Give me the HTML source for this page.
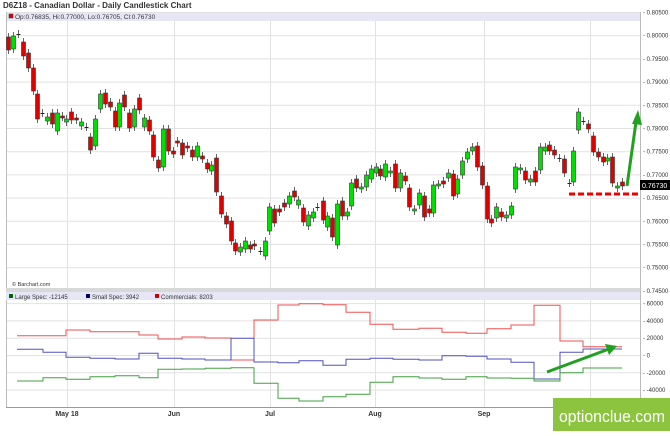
<!DOCTYPE html>
<html><head><meta charset="utf-8"><style>
body{margin:0;width:670px;height:431px;overflow:hidden;background:#fff;font-family:"Liberation Sans",sans-serif}
</style></head><body>
<svg id="s" width="670" height="431" xmlns="http://www.w3.org/2000/svg" font-family="Liberation Sans, sans-serif">
<rect width="670" height="431" fill="#fff"/>
<text x="3" y="8" font-size="8" font-weight="bold" fill="#333">D6Z18 - Canadian Dollar - Daily Candlestick Chart</text>
<rect x="6" y="12" width="634" height="9" fill="#e6e6f7"/>
<rect x="9" y="14" width="4" height="4" fill="#d00" stroke="#333" stroke-width="0.5"/>
<text x="15" y="19" font-size="6.5" fill="#333">Op:0.76835, Hi:0.77000, Lo:0.76705, Cl:0.76730</text>
<g id="grid" stroke="#e2e2e2" stroke-width="1"></g>
<line x1="6.5" y1="12" x2="6.5" y2="407" stroke="#bbb"/>
<line x1="640.5" y1="12" x2="640.5" y2="407" stroke="#bbb"/>
<rect x="6" y="288" width="634" height="4" fill="#d8d8d8"/>
<rect x="6" y="292" width="634" height="8" fill="#e6e6f7"/>
<rect x="9" y="294" width="4" height="4" fill="#060"/>
<text x="15" y="299" font-size="6" fill="#333">Large Spec: -12145</text>
<rect x="86" y="294" width="4" height="4" fill="#006"/>
<text x="92" y="299" font-size="6" fill="#333">Small Spec: 3942</text>
<rect x="155" y="294" width="4" height="4" fill="#c00"/>
<text x="161" y="299" font-size="6" fill="#333">Commercials: 8203</text>
<line x1="6" y1="407.5" x2="640" y2="407.5" stroke="#999"/>
<text x="12" y="286" font-size="5.5" fill="#333">© Barchart.com</text>
<g id="c"></g>
<g id="lines" fill="none" stroke-width="1"></g>
<line x1="569" y1="194" x2="640" y2="194" stroke="#e00" stroke-width="3" stroke-dasharray="6,3"/>
<line x1="627" y1="186" x2="636" y2="122" stroke="#22a022" stroke-width="3"/>
<polygon points="638,110 632,124 642,125" fill="#22a022"/>
<line x1="547" y1="372" x2="609" y2="349" stroke="#22a022" stroke-width="3"/>
<polygon points="617,346 605,344 609,355" fill="#22a022"/>
<rect x="640" y="180" width="30" height="10" fill="#000"/>
<text x="642" y="188" font-size="7" fill="#fff">0.76730</text>
<g font-size="7" font-weight="bold" fill="#333" text-anchor="middle">
<text x="67" y="416">May 18</text><text x="174" y="416">Jun</text><text x="270" y="416">Jul</text><text x="375" y="416">Aug</text><text x="484" y="416">Sep</text></g>
<g id="lab" font-size="6" fill="#333"></g>
<rect x="553" y="398" width="117" height="33" fill="#8cc43f"/>
<text x="559" y="422" font-size="17" fill="#fff" textLength="106" lengthAdjust="spacingAndGlyphs">optionclue.com</text>
</svg>
<script>
var NS="http://www.w3.org/2000/svg";
function el(p,t,a){var e=document.createElementNS(NS,t);for(var k in a)e.setAttribute(k,a[k]);document.getElementById(p).appendChild(e);return e;}
for(var i=0;i<=12;i++){var y=12+i*23.2;el("grid","line",{x1:6,x2:640,y1:y+.5,y2:y+.5});
var t=el("lab","text",{x:643,y:y+2.5});t.textContent="- "+(0.805-i*0.005).toFixed(5);}
[67,174,270,375,484,590].forEach(function(x){el("grid","line",{x1:x+.5,x2:x+.5,y1:21,y2:288});el("grid","line",{x1:x+.5,x2:x+.5,y1:300,y2:407});});
[60000,40000,20000,0,-20000,-40000].forEach(function(v){var y=355-v/20000*17.3;el("grid","line",{x1:6,x2:640,y1:y+.5,y2:y+.5});
var t=el("lab","text",{x:643,y:y+2.5});t.textContent="- "+v;});
var C=[[8,37,50,'r'],[13,36,49,'g'],[18,34,34,'d'],[23,42,56,'r'],[28,53,68,'r'],[33,68,91,'r'],[37,94,119,'r'],[42,113,113,'d'],[47,117,121,'g'],[52,113,124,'r'],[57,113,131,'g'],[62,116,117,'r'],[66,119,122,'g'],[71,112,120,'r'],[76,118,120,'r'],[81,122,126,'g'],[86,127,127,'d'],[90,137,150,'r'],[95,119,146,'g'],[100,94,109,'g'],[105,93,104,'r'],[110,102,107,'r'],[115,111,127,'r'],[119,103,127,'g'],[124,95,107,'r'],[129,113,128,'r'],[134,109,127,'g'],[139,98,110,'r'],[144,118,127,'g'],[149,120,131,'r'],[153,135,157,'r'],[158,160,168,'r'],[163,129,167,'g'],[168,129,151,'r'],[173,151,154,'r'],[177,141,143,'r'],[182,143,155,'r'],[187,146,148,'r'],[192,150,157,'r'],[197,146,157,'g'],[202,156,159,'r'],[207,163,169,'r'],[211,165,171,'g'],[216,158,192,'r'],[221,196,214,'r'],[226,216,224,'r'],[231,221,241,'r'],[235,243,251,'r'],[240,247,252,'g'],[245,241,249,'g'],[250,245,249,'r'],[254,244,246,'r'],[260,251,251,'d'],[265,241,256,'g'],[269,207,231,'g'],[274,209,223,'r'],[279,209,212,'r'],[284,203,207,'r'],[289,196,204,'g'],[294,191,197,'r'],[298,200,205,'g'],[303,208,222,'r'],[308,215,226,'g'],[313,212,218,'g'],[317,207,207,'d'],[323,201,220,'r'],[327,216,227,'g'],[332,218,237,'r'],[337,204,245,'g'],[342,201,216,'r'],[347,212,216,'g'],[351,183,206,'g'],[356,179,188,'r'],[361,187,189,'g'],[366,175,187,'g'],[371,169,179,'g'],[376,167,173,'g'],[380,169,176,'r'],[385,164,177,'g'],[390,171,173,'g'],[395,164,188,'r'],[400,173,188,'g'],[405,176,181,'r'],[409,188,207,'r'],[414,209,211,'g'],[419,193,205,'g'],[424,196,217,'r'],[429,209,213,'r'],[433,185,213,'g'],[438,184,185,'g'],[443,181,184,'r'],[448,173,178,'g'],[453,174,196,'r'],[457,179,194,'g'],[462,161,175,'g'],[467,152,159,'g'],[472,147,151,'g'],[477,146,167,'r'],[482,166,185,'r'],[487,186,219,'r'],[491,219,223,'r'],[496,207,218,'g'],[501,212,217,'r'],[506,215,218,'g'],[511,206,215,'g'],[515,167,189,'g'],[520,168,170,'g'],[525,171,180,'r'],[530,179,182,'g'],[535,171,182,'r'],[540,147,170,'g'],[545,147,151,'g'],[549,145,151,'r'],[554,150,155,'r'],[559,158,158,'d'],[564,159,173,'r'],[569,183,183,'d'],[573,151,182,'g'],[578,112,130,'g'],[583,121,121,'d'],[588,124,129,'r'],[593,136,152,'r'],[598,152,157,'r'],[603,157,162,'r'],[607,158,161,'g'],[612,157,183,'r'],[617,186,188,'g'],[622,182,186,'r']];
C.forEach(function(c){var x=c[0],t=c[1],b=c[2];el("c","line",{x1:x+.5,x2:x+.5,y1:t-4,y2:b+4,stroke:"#666","stroke-width":1});
if(c[3]=='d'){el("c","line",{x1:x-1.5,x2:x+2.5,y1:t+.5,y2:t+.5,stroke:"#222"});}
else el("c","rect",{x:x-1.5,y:t,width:4,height:Math.max(b-t,2),fill:c[3]=='r'?'#e00000':'#00e000',stroke:'#333','stroke-width':0.6});});
var X=[17,43,66,90,115,139,158,182,205,231,254,278,299,323,346,370,393,419,442,466,487,511,534,560,583,622];
function step(Y,col){var d="M"+X[0]+" "+Y[0];for(var i=0;i<Y.length;i++){d+=" V"+Y[i]+" H"+X[i+1];}el("lines","path",{d:d,stroke:col});}
step([335.7,335.7,330,331.7,331.7,335,339,337,338,360,320,305,303.7,304.7,312.3,324.3,329.3,328.3,332.3,333.3,328.7,325,305.3,341,346.7],"#f05050");
step([349.3,352.3,357.3,358.3,359,353.3,358.3,359,360,338.3,362,362.7,360.7,365.3,359.3,358.3,359.3,360,355.7,356.3,359,362.3,379,352.3,349],"#5050c0");
step([381,377.7,379.3,376.7,375.7,377.7,369.3,369,368.3,367.7,383.3,398.3,401,396.7,394.3,382.3,376.7,378,379.3,376.7,378,378.3,381,372.7,368],"#40a040");
</script>
</body></html>
